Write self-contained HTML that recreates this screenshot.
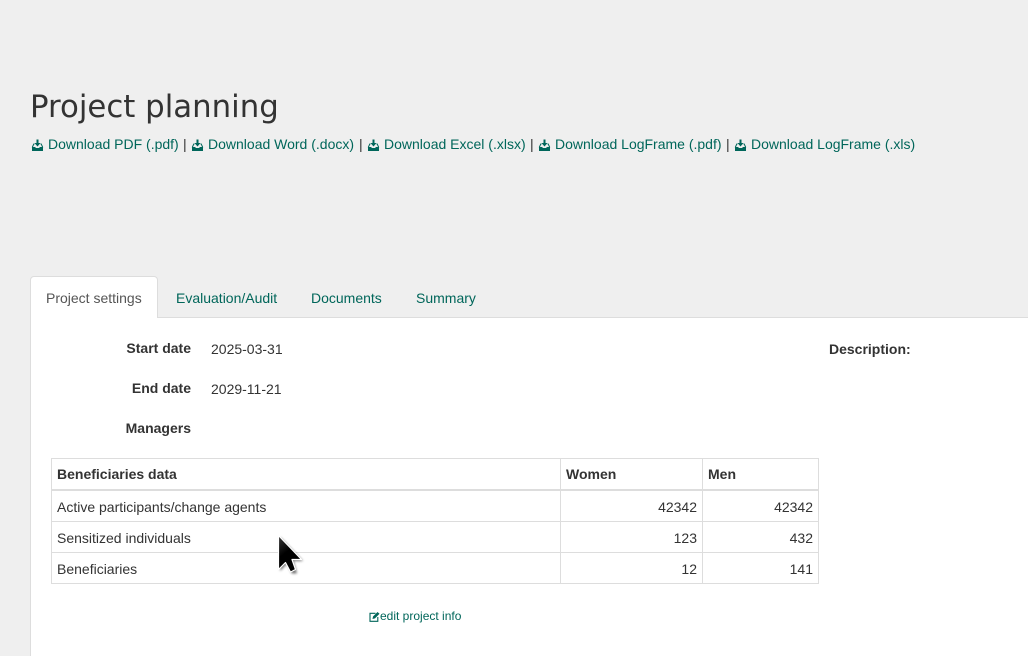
<!DOCTYPE html>
<html><head><meta charset="utf-8"><style>
html,body{margin:0;padding:0;background:#efefef;width:1028px;height:656px;overflow:hidden}
body{position:relative;font-family:"Liberation Sans",sans-serif;font-size:14px;color:#333}
.a{position:absolute;white-space:nowrap;line-height:20px}
.l{color:#00665a}
b{color:#333}
.c{position:absolute;background:#ddd}
svg{position:absolute}
</style></head><body>
<div class="a" style="left:30px;top:87px;font-family:'DejaVu Sans',sans-serif;font-size:30.8px;line-height:40px;color:#333">Project planning</div>
<svg width="0" height="0"><defs><symbol id="dl" viewBox="0 0 13 13"><path fill="#00665a" d="M5.500 .5h2v3.500h2L6.500 7.500 3.500 4h2z"/><path fill="none" stroke="#00665a" stroke-width="1" d="M3.500 5H2.800L1.200 8.500M9.500 5h.7l1.600 3.500"/><path fill="#00665a" d="M1 8h3l1 1h3l1-1h3v4H1z"/></symbol></defs></svg>
<svg style="left:31px;top:139px" width="13" height="13"><use href="#dl"/></svg>
<div class="a l" style="left:48px;top:134px">Download PDF (.pdf)</div>
<div class="a" style="left:183px;top:134px">|</div>
<svg style="left:191px;top:139px" width="13" height="13"><use href="#dl"/></svg>
<div class="a l" style="left:208px;top:134px">Download Word (.docx)</div>
<div class="a" style="left:359px;top:134px">|</div>
<svg style="left:367px;top:139px" width="13" height="13"><use href="#dl"/></svg>
<div class="a l" style="left:384px;top:134px">Download Excel (.xlsx)</div>
<div class="a" style="left:530px;top:134px">|</div>
<svg style="left:538px;top:139px" width="13" height="13"><use href="#dl"/></svg>
<div class="a l" style="left:555px;top:134px">Download LogFrame (.pdf)</div>
<div class="a" style="left:726px;top:134px">|</div>
<svg style="left:734px;top:139px" width="13" height="13"><use href="#dl"/></svg>
<div class="a l" style="left:751px;top:134px">Download LogFrame (.xls)</div>

<div style="position:absolute;left:30px;top:317px;width:998px;height:339px;background:#fff;border-top:1px solid #ddd;border-left:1px solid #ddd;box-sizing:border-box"></div>
<div style="position:absolute;left:30px;top:276px;width:128px;height:42px;background:#fff;border:1px solid #ddd;border-bottom:none;border-radius:4px 4px 0 0;box-sizing:border-box"></div>
<div class="a" style="left:46px;top:288px;color:#555">Project settings</div>
<div class="a l" style="left:176px;top:288px">Evaluation/Audit</div>
<div class="a l" style="left:311px;top:288px">Documents</div>
<div class="a l" style="left:416px;top:288px">Summary</div>

<div class="a" style="right:837px;top:338px"><b>Start date</b></div>
<div class="a" style="left:211px;top:339px">2025-03-31</div>
<div class="a" style="right:837px;top:378px"><b>End date</b></div>
<div class="a" style="left:211px;top:379px">2029-11-21</div>
<div class="a" style="right:837px;top:418px"><b>Managers</b></div>
<div class="a" style="left:829px;top:339px"><b>Description:</b></div>

<div class="c" style="left:51px;top:458px;width:768px;height:1px"></div>
<div class="c" style="left:51px;top:489px;width:768px;height:2px"></div>
<div class="c" style="left:51px;top:521px;width:768px;height:1px"></div>
<div class="c" style="left:51px;top:552px;width:768px;height:1px"></div>
<div class="c" style="left:51px;top:583px;width:768px;height:1px"></div>
<div class="c" style="left:51px;top:458px;width:1px;height:126px"></div>
<div class="c" style="left:560px;top:458px;width:1px;height:126px"></div>
<div class="c" style="left:702px;top:458px;width:1px;height:126px"></div>
<div class="c" style="left:818px;top:458px;width:1px;height:126px"></div>

<div class="a" style="left:57px;top:464px"><b>Beneficiaries data</b></div>
<div class="a" style="left:566px;top:464px"><b>Women</b></div>
<div class="a" style="left:708px;top:464px"><b>Men</b></div>
<div class="a" style="left:57px;top:497px">Active participants/change agents</div>
<div class="a" style="right:331px;top:497px">42342</div>
<div class="a" style="right:215px;top:497px">42342</div>
<div class="a" style="left:57px;top:528px">Sensitized individuals</div>
<div class="a" style="right:331px;top:528px">123</div>
<div class="a" style="right:215px;top:528px">432</div>
<div class="a" style="left:57px;top:559px">Beneficiaries</div>
<div class="a" style="right:331px;top:559px">12</div>
<div class="a" style="right:215px;top:559px">141</div>

<svg style="left:369px;top:611px" width="11" height="11" viewBox="0 0 11 11"><path fill="none" stroke="#00665a" stroke-width="1.100" d="M6.500 2.300H1V10.300H8.800V6"/><path fill="#00665a" d="M3.500 8 4 5.500 8.500 1 10.500 2.800 6 7.400z"/></svg>
<div class="a l" style="left:380px;top:606px;font-size:12px">edit project info</div>

<svg style="left:270px;top:528px;overflow:visible" width="40" height="50" viewBox="270 528 40 50"><defs><linearGradient id="g" x1="0" y1="0" x2="0.500" y2="1"><stop offset="0" stop-color="#3a3a3a"/><stop offset=".5" stop-color="#000"/></linearGradient><filter id="s" x="-40%" y="-30%" width="180%" height="160%"><feGaussianBlur stdDeviation="1.300"/></filter></defs><path fill="#000" opacity=".55" filter="url(#s)" transform="translate(1.500 1.500)" d="M278.500 535.500V569.500L285.500 562.500L290.500 572H295.500L292 559.500H301.500z"/><path fill="url(#g)" stroke="#fff" stroke-width="1.200" stroke-linejoin="round" d="M278.500 535.500V569.500L285.500 562.500L290.500 572L295.500 569.500L292 559.500H301.500z"/></svg>
</body></html>
